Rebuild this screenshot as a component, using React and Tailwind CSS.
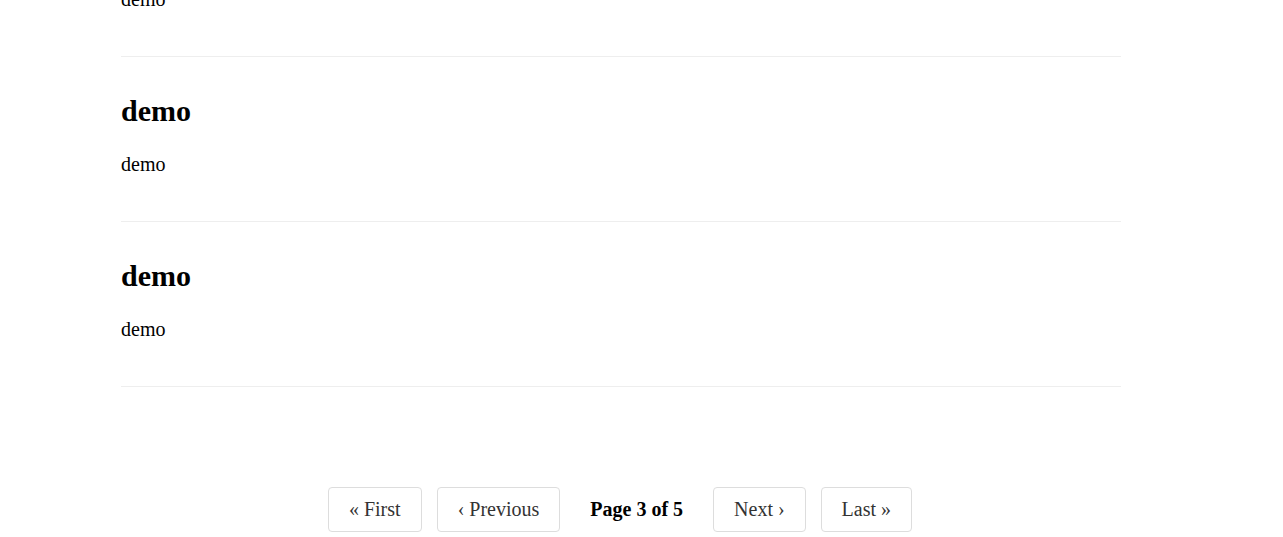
export default function App() {
  const items = [0, 1, 2];
  return (
    <div
      className="bg-white h-[537px] overflow-hidden text-black"
      style={{ fontFamily: '"Liberation Serif", "Times New Roman", serif' }}
    >
      <div className="ml-[121px] w-[1000px] mt-[-108px]">
        {items.map((i) => (
          <div key={i} className="pt-[37px] pb-[45px] border-b border-[#eeeeee]">
            <h2 className="m-0 text-[30px] leading-[34px] font-bold">demo</h2>
            <p className="mt-[25px] mb-0 text-[20px] leading-[23px]">demo</p>
          </div>
        ))}
        <div className="mt-[100px] pr-[2px] flex items-center justify-center gap-[15px] text-[20px] leading-[23px]">
          <a className="px-5 py-2.5 border border-[#dddddd] rounded text-[#333333]">« First</a>
          <a className="px-5 py-2.5 border border-[#dddddd] rounded text-[#333333]">‹ Previous</a>
          <span className="px-[15px] font-bold">Page 3 of 5</span>
          <a className="px-5 py-2.5 border border-[#dddddd] rounded text-[#333333]">Next ›</a>
          <a className="px-5 py-2.5 border border-[#dddddd] rounded text-[#333333]">Last »</a>
        </div>
      </div>
    </div>
  );
}
